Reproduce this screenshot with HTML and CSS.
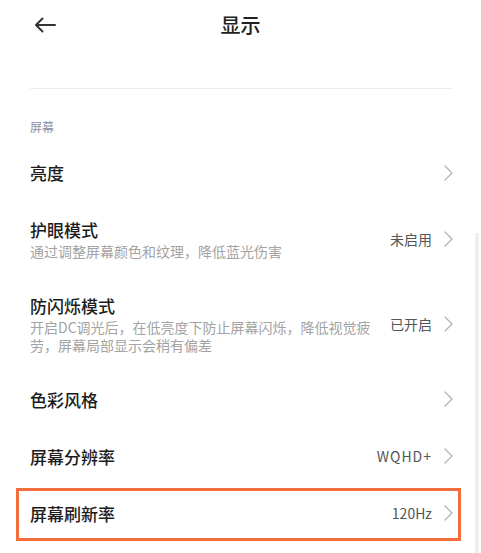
FILE: index.html
```html
<!DOCTYPE html>
<html lang="zh-CN">
<head>
<meta charset="utf-8">
<title>显示</title>
<link rel="stylesheet" href="styles.css">
</head>
<body>
<div class="page">
  <header class="topbar">
    <div class="back">
      <svg width="22" height="16" viewBox="0 0 22 16" fill="none" stroke="#333" stroke-width="2" stroke-linecap="round" stroke-linejoin="round"><path d="M21 8H2M8.5 1.5L2 8l6.5 6.5"/></svg>
    </div>
    <h1 class="title">显示</h1>
    <div></div>
  </header>
  <div class="spacer"></div>
  <div class="divider"></div>
  <div class="section">屏幕</div>

  <div class="row">
    <div class="text"><div class="name">亮度</div></div>
    <div class="right"><svg class="chev" width="9" height="16" viewBox="0 0 9 16" fill="none"><path d="M1 1l7 7-7 7"/></svg></div>
  </div>

  <div class="row">
    <div class="text"><div class="name">护眼模式</div><div class="sub">通过调整屏幕颜色和纹理，降低蓝光伤害</div></div>
    <div class="right"><span class="val">未启用</span><svg class="chev" width="9" height="16" viewBox="0 0 9 16" fill="none"><path d="M1 1l7 7-7 7"/></svg></div>
  </div>

  <div class="row">
    <div class="text"><div class="name">防闪烁模式</div><div class="sub">开启DC调光后，在低亮度下防止屏幕闪烁，降低视觉疲劳，屏幕局部显示会稍有偏差</div></div>
    <div class="right"><span class="val">已开启</span><svg class="chev" width="9" height="16" viewBox="0 0 9 16" fill="none"><path d="M1 1l7 7-7 7"/></svg></div>
  </div>

  <div class="row">
    <div class="text"><div class="name">色彩风格</div></div>
    <div class="right"><svg class="chev" width="9" height="16" viewBox="0 0 9 16" fill="none"><path d="M1 1l7 7-7 7"/></svg></div>
  </div>

  <div class="row">
    <div class="text"><div class="name">屏幕分辨率</div></div>
    <div class="right"><span class="val wide">WQHD+</span><svg class="chev" width="9" height="16" viewBox="0 0 9 16" fill="none"><path d="M1 1l7 7-7 7"/></svg></div>
  </div>

  <div class="row highlight">
    <div class="text"><div class="name">屏幕刷新率</div></div>
    <div class="right"><span class="val">120Hz</span><svg class="chev" width="9" height="16" viewBox="0 0 9 16" fill="none"><path d="M1 1l7 7-7 7"/></svg></div>
  </div>

  <div class="scrollbar"></div>
</div>
</body>
</html>
```

FILE: styles.css
```css
html, body {
  margin: 0;
  padding: 0;
  background: #fff;
}
body {
  font-family: "Noto Sans CJK SC", "Noto Sans", sans-serif;
  color: #1c1c1c;
}
.page {
  position: relative;
  width: 481px;
  height: 553px;
  overflow: hidden;
}
.topbar {
  height: 50px;
  display: grid;
  grid-template-columns: 1fr auto 1fr;
  align-items: center;
}
.back {
  padding-left: 34px;
  display: flex;
  align-items: center;
}
.title {
  margin: 0;
  font-size: 20px;
  font-weight: 500;
  line-height: 28px;
  color: #222;
}
.spacer {
  height: 38px;
}
.divider {
  margin: 0 28px 0 30px;
  border-top: 1px solid #ededed;
}
.section {
  padding: 29px 0 0 30px;
  font-size: 12px;
  line-height: 18px;
  color: #8a90a2;
  margin-bottom: 8px;
}
.row {
  position: relative;
  display: flex;
  align-items: center;
  gap: 16px;
  padding: 16px 28px 16px 30px;
}
.text {
  flex: 1;
  min-width: 0;
}
.name {
  font-size: 17px;
  font-weight: 500;
  line-height: 25px;
  color: #1c1c1c;
}
.sub {
  font-size: 14px;
  line-height: 18.5px;
  color: #a3a3a3;
}
.right {
  display: flex;
  align-items: center;
  gap: 12px;
  flex-shrink: 0;
}
.val {
  font-size: 14px;
  line-height: 20px;
  color: #555;
}
.val.wide {
  letter-spacing: 1px;
}
.chev path {
  stroke: #b3b3b3;
  stroke-width: 1.3;
  stroke-linecap: round;
  stroke-linejoin: round;
}
.highlight::after {
  content: "";
  position: absolute;
  left: 16px;
  right: 20px;
  top: 3px;
  bottom: 1px;
  border: 3px solid #f36c3b;
  pointer-events: none;
}
.scrollbar {
  position: absolute;
  right: 2px;
  top: 233px;
  bottom: 0;
  width: 4px;
  background: #efefef;
}
```
